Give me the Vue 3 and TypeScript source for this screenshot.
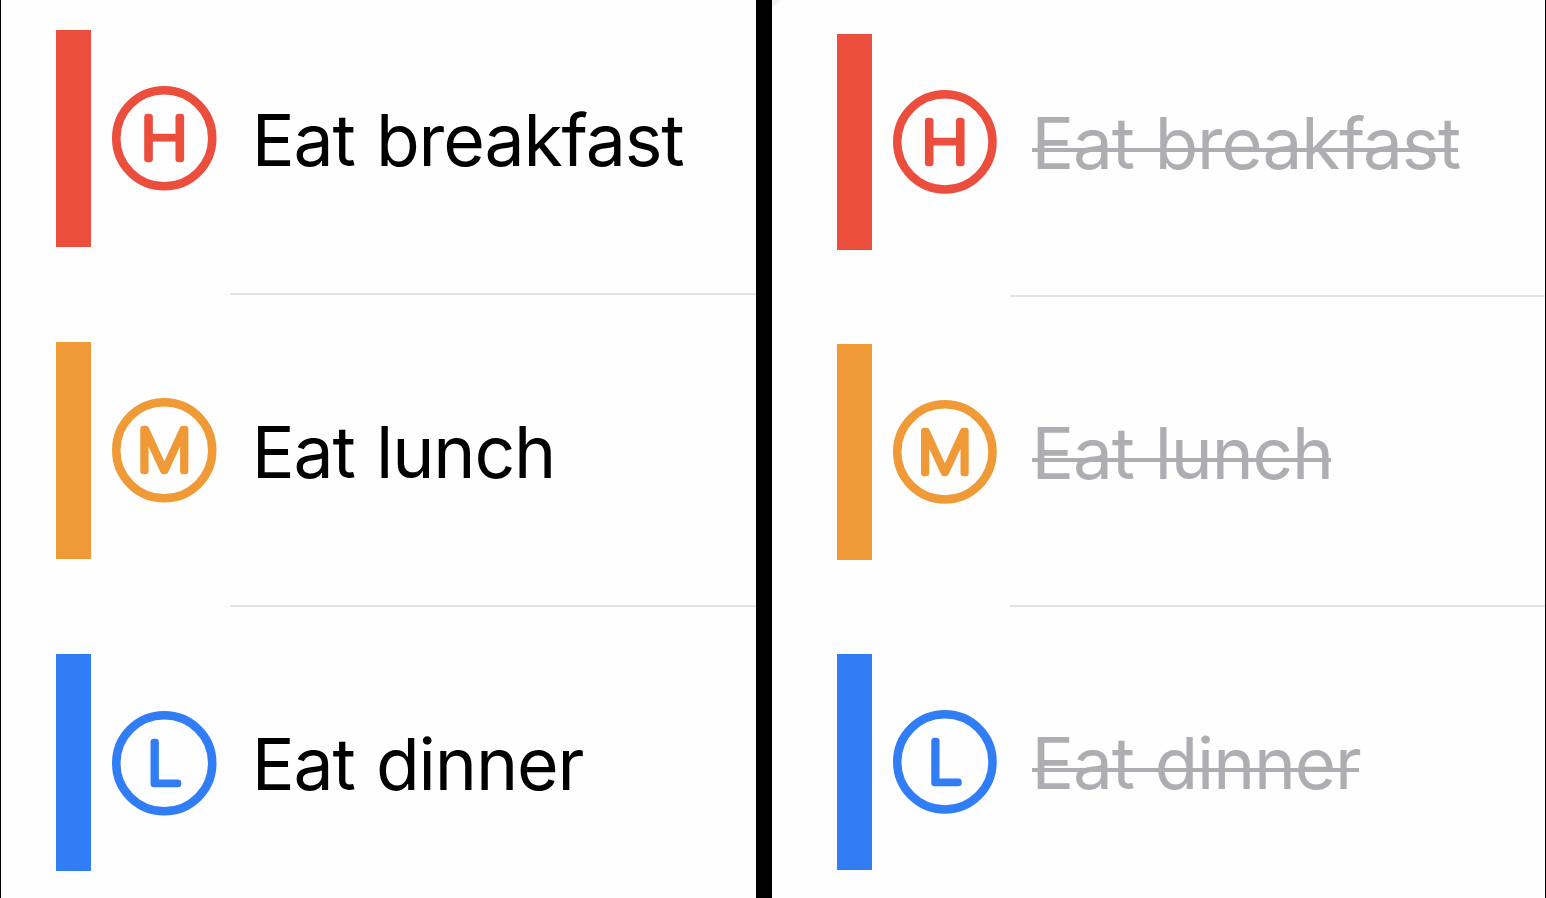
<script setup lang="ts">
interface Task {
  letter: string
  title: string
  tone: string
}

interface Panel {
  name: string
  done: boolean
}

const tasks: Task[] = [
  { letter: 'H', title: 'Eat breakfast', tone: 'high' },
  { letter: 'M', title: 'Eat lunch', tone: 'medium' },
  { letter: 'L', title: 'Eat dinner', tone: 'low' },
]

const panels: Panel[] = [
  { name: 'open', done: false },
  { name: 'done', done: true },
]
</script>

<template>
  <main class="board">
    <section v-for="panel in panels" :key="panel.name" class="panel" :class="panel.name">
      <ul class="list">
        <li v-for="task in tasks" :key="task.letter" class="row" :class="task.tone">
          <span class="bar"></span>
          <svg class="badge" viewBox="0 0 104.5 104.5">
            <circle cx="52.25" cy="52.25" r="48" />
            <text x="52.25" y="73.1" text-anchor="middle">{{ task.letter }}</text>
          </svg>
          <div class="body">
            <span class="title">{{ task.title }}</span>
          </div>
        </li>
      </ul>
    </section>
  </main>
</template>

<style>
body {
  margin: 0;
  background: #000;
}
</style>

<style scoped>
.board {
  box-sizing: border-box;
  display: grid;
  grid-template-columns: 755px 773.4px;
  column-gap: 15.8px;
  width: 1546px;
  height: 898px;
  padding-left: 1px;
  overflow: hidden;
  background: #000;
  font-family: Inter, "Liberation Sans", sans-serif;
}
.panel {
  --k: 1px;
  position: relative;
  height: 898px;
  overflow: hidden;
  background: #fefefe;
}
.open .list {
  margin-top: -17.8px;
  padding-left: 54.6px;
}
.done {
  --k: 0.9928px;
}
.done .list {
  margin-top: -13.2px;
  padding-left: 65px;
}
.done::before {
  content: "";
  position: absolute;
  left: 0;
  top: 0;
  width: 9px;
  height: 10px;
  background: linear-gradient(135deg, #f1f1f7 36%, transparent 52%);
}
.list {
  margin: 0;
  padding: 0;
  list-style: none;
}
.row {
  display: flex;
  align-items: center;
  height: calc(312.3 * var(--k));
}
.bar {
  flex: none;
  width: calc(35.3 * var(--k));
  height: calc(217 * var(--k));
  background: currentColor;
}
.badge {
  flex: none;
  width: calc(104.5 * var(--k));
  height: calc(104.5 * var(--k));
  margin-left: calc(21 * var(--k));
  overflow: visible;
}
.badge circle {
  fill: none;
  stroke: currentColor;
  stroke-width: 8.5;
}
.badge text {
  fill: currentColor;
  stroke: currentColor;
  stroke-width: 6.4;
  stroke-linejoin: round;
  font-size: 57.6px;
  font-weight: 100;
  transform: scaleX(1.07);
  transform-origin: 52.25px 52.25px;
}
.high .badge text {
  transform: scaleX(1.12);
}
.body {
  box-sizing: border-box;
  display: flex;
  flex: 1;
  align-items: center;
  align-self: stretch;
  margin-left: calc(13.4 * var(--k));
  padding: 5px 0 0 calc(22 * var(--k));
  border-bottom: 2px solid #e3e3e4;
}
.open .body {
  margin-bottom: -0.3px;
  padding-top: 6px;
}
.row:last-child .body {
  border-bottom-color: transparent;
}
.title {
  position: relative;
  color: #000;
  font-size: calc(71.5 * var(--k));
  font-weight: 400;
  line-height: 1.2;
  letter-spacing: -0.016em;
  word-spacing: 0.03em;
  white-space: nowrap;
}
.done .title {
  color: #aeaeb2;
}
.done .title::after {
  content: "";
  position: absolute;
  left: 0;
  right: 2px;
  top: 47px;
  height: 4.6px;
  background: currentColor;
}
.high {
  color: #eb4e3d;
}
.medium {
  color: #f09a37;
}
.low {
  color: #307df6;
}
</style>
